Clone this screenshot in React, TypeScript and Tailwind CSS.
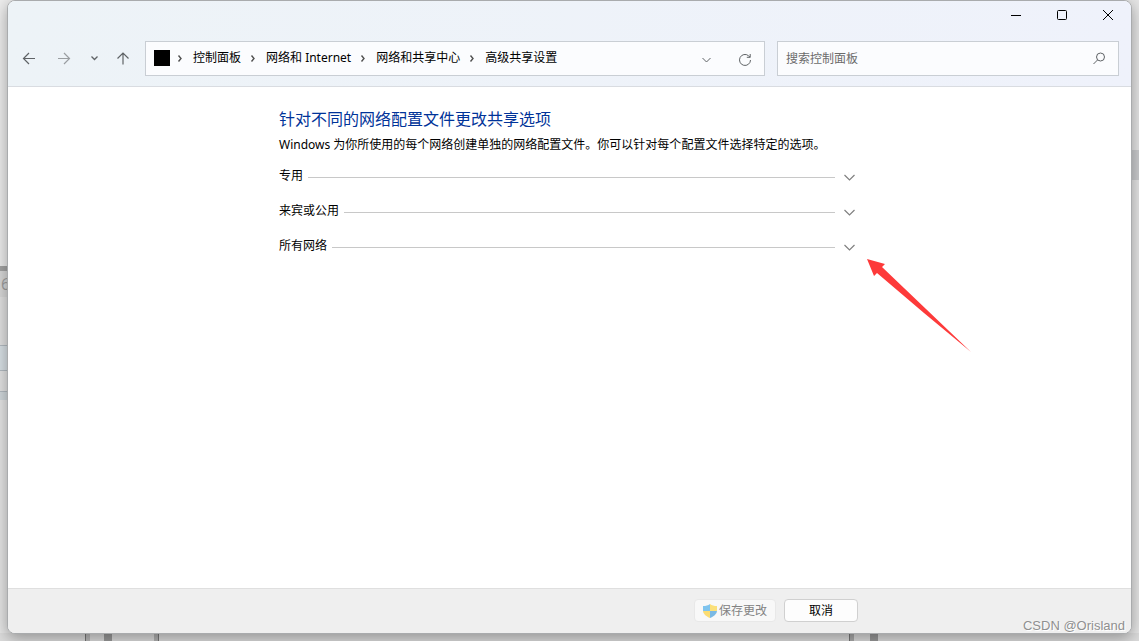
import type { ReactNode } from "react";

const crumbs = ["控制面板", "网络和 Internet", "网络和共享中心", "高级共享设置"];
const profiles = ["专用", "来宾或公用", "所有网络"];

function Icon({ size = 16, className = "", children }: { size?: number; className?: string; children: ReactNode }) {
  return (
    <svg
      width={size}
      height={size}
      viewBox={`0 0 ${size} ${size}`}
      fill="none"
      stroke="currentColor"
      className={`shrink-0 ${className}`}
      aria-hidden="true"
    >
      {children}
    </svg>
  );
}

function Shield() {
  return (
    <svg width="14" height="14" viewBox="0 0 14 14" className="shrink-0" aria-hidden="true">
      <path d="M7 0C5 1.500 3 2 0 2V7H7Z" fill="#7fc4ee" />
      <path d="M7 0C9 1.500 11 2 14 2V7H7Z" fill="#fbe07a" />
      <path d="M0 7H7V14C3.500 12.500 .4 10.500 0 7Z" fill="#fbdc72" />
      <path d="M14 7H7V14C10.500 12.500 13.600 10.500 14 7Z" fill="#7ab9e4" />
    </svg>
  );
}

// Windows that stay partly visible around the dialog
function Backdrop() {
  return (
    <div className="absolute inset-0 overflow-hidden bg-[#e6e6e6]" aria-hidden="true">
      <div className="flex h-full w-4 flex-col font-['Open_Sans',sans-serif] text-[16px] text-[#a0a0a0]">
        <div className="h-[266px] bg-[#ededed]" />
        <div className="h-[5px] bg-[#a4a4a4]" />
        <div className="flex h-[26px] items-center bg-[#d9d9d9] pl-[1px]">6</div>
        <div className="h-12 bg-[#e2e2e2]" />
        <div className="h-[26px] border-y border-[#b4bcc2] bg-[#d9e1e6]" />
        <div className="h-[21px] border-b border-[#b4bcc2] bg-[#e4e4e4]" />
        <div className="h-2 bg-[#d2d9dd]" />
        <div className="flex-1 bg-[#e6e6e6]" />
      </div>
      <div className="absolute right-0 top-[150px] h-[30px] w-2 bg-[#cccdcf]" />
      <div className="absolute inset-x-0 bottom-0 flex h-2 bg-[#dcdcdc]">
        <div className="ml-[85px] w-[5px] border-l border-[#777] bg-[#b9b9b9]" />
        <div className="ml-[14px] w-2 bg-[#999]" />
        <div className="ml-[42px] w-[5px] border-r border-[#777] bg-[#b0b0b0]" />
        <div className="flex-1" />
        <div className="w-[5px] border-l border-[#777] bg-[#aaa]" />
        <div className="ml-4 mr-[261px] w-2 bg-[#999]" />
      </div>
    </div>
  );
}

function TitleBar() {
  return (
    <div className="flex h-[30px] items-center justify-end text-black">
      <button aria-label="最小化" className="flex h-full w-[46px] items-center justify-center">
        <Icon size={12}>
          <path d="M1 5.500H11" />
        </Icon>
      </button>
      <button aria-label="最大化" className="flex h-full w-[46px] items-center justify-center">
        <Icon size={12}>
          <rect x="1.500" y="0.500" width="9" height="9" rx="1" />
        </Icon>
      </button>
      <button aria-label="关闭" className="flex h-full w-[46px] items-center justify-center">
        <Icon size={12}>
          <path d="M1 0L11 10M11 0L1 10" />
        </Icon>
      </button>
    </div>
  );
}

function NavBar() {
  return (
    <div className="flex items-center pb-[10px] pl-[13px] pr-3 pt-[10px] text-[#5f6366]">
      <button aria-label="后退">
        <Icon>
          <path d="M14 7.500H2.500M8 2L2.500 7.500L8 13" strokeWidth="1.200" />
        </Icon>
      </button>
      <button aria-label="前进" className="ml-[19px] text-[#9a9ea1]">
        <Icon>
          <path d="M2 7.500H13.500M8 2L13.500 7.500L8 13" strokeWidth="1.200" />
        </Icon>
      </button>
      <button aria-label="最近浏览的位置" className="ml-[15px]">
        <Icon>
          <path d="M4.500 5.500L7.500 8.500L10.500 5.500" strokeWidth="1.300" />
        </Icon>
      </button>
      <button aria-label="向上" className="ml-3">
        <Icon>
          <path d="M8 13.500V2M2.500 7.500L8 2L13.500 7.500" strokeWidth="1.200" />
        </Icon>
      </button>

      <div className="ml-[14px] flex h-[35px] flex-1 items-center border border-[#c9ced4] bg-[#fbfcfe] pl-2 pr-[11px]">
        <span className="mb-[1px] size-4 bg-black" />
        <nav aria-label="地址" className="mb-[2px] flex items-center text-black">
          {crumbs.map((crumb) => (
            <span key={crumb} className="flex items-center">
              <Icon size={8} className="ml-[6px] mr-[9px] text-[#505050]">
                <path d="M2.500 1.500L5 4.500L2.500 7.500" strokeWidth="1.400" />
              </Icon>
              <a href="#" className="mr-[2px] whitespace-nowrap">
                {crumb}
              </a>
            </span>
          ))}
        </nav>
        <button aria-label="以前的位置" className="ml-auto mt-[2px]">
          <Icon>
            <path d="M3.500 6L7.500 10L11.500 6" />
          </Icon>
        </button>
        <button aria-label="刷新" className="ml-[22px] mt-[3px]">
          <Icon>
            <path d="M13.500 8A5.500 5.500 0 1 1 11.500 3.700L13 5.200M13.200 2V5.300H9.800" />
          </Icon>
        </button>
      </div>

      <label className="ml-3 flex h-[35px] w-[342px] items-center border border-[#c9ced4] bg-[#fbfcfe] pl-2 pr-3">
        <input
          type="text"
          aria-label="搜索控制面板"
          placeholder="搜索控制面板"
          className="min-w-0 flex-1 bg-transparent outline-none placeholder:text-[#6b6b6b]"
        />
        <Icon size={14}>
          <circle cx="8.500" cy="5" r="4" />
          <path d="M5.500 8L1.500 12" />
        </Icon>
      </label>
    </div>
  );
}

function ProfileRow({ name }: { name: string }) {
  return (
    <button className="flex h-[35px] w-full items-center text-left" aria-expanded="false">
      <span className="pb-[3px]">{name}</span>
      <span className="ml-[5px] mr-[6px] h-px flex-1 bg-[#c8c8c8]" />
      <Icon className="mr-[3px] text-[#808080]">
        <path d="M3.500 5L8.500 10L13.500 5" strokeWidth="1.200" />
      </Icon>
    </button>
  );
}

export default function App() {
  return (
    <div className="relative flex min-h-screen flex-col font-['Noto_Sans','Noto_Sans_CJK_SC',sans-serif] text-[12px] leading-[18px] text-black">
      <Backdrop />
      <div className="relative mx-[7px] mb-[7px] flex flex-1 flex-col overflow-hidden rounded-lg border border-[#a9abad] bg-white shadow-[0_4px_16px_rgba(0,0,0,0.35)]">
        <header className="border-b border-[#d9dce1] bg-linear-to-r from-[#edf3f7] to-[#eff2fb]">
          <TitleBar />
          <NavBar />
        </header>

        <main className="mx-auto w-[581px] flex-1 pt-5">
          <h1 className="text-[16px] leading-6 text-[#003399]">针对不同的网络配置文件更改共享选项</h1>
          <p className="mt-[5px] whitespace-nowrap">
            Windows 为你所使用的每个网络创建单独的网络配置文件。你可以针对每个配置文件选择特定的选项。
          </p>
          <div className="mt-[6px]">
            {profiles.map((name) => (
              <ProfileRow key={name} name={name} />
            ))}
          </div>
        </main>

        <footer className="border-t border-[#dfdfdf] bg-[#efefef]">
          <div className="mx-auto flex h-11 w-[581px] items-start justify-end gap-2 pr-[2px] pt-[10px]">
            <button
              disabled
              className="flex h-[23px] w-[82px] items-center justify-center gap-[2px] rounded border border-[#e8e8e8] bg-[#f8f8f8] text-[#838383]"
            >
              <Shield />
              保存更改
            </button>
            <button className="h-[23px] w-[74px] rounded border border-[#d0d0d0] bg-[#fdfdfd] leading-5">取消</button>
          </div>
        </footer>
      </div>

      {/* pointer to the last row */}
      <svg
        className="absolute left-[866px] top-[258px]"
        width="106"
        height="96"
        viewBox="0 0 106 96"
        fill="#fd3a3a"
        aria-hidden="true"
      >
        <path d="M1 1L19 6L16 9L60 51L105 94L58 55L11 15L8 18Z" />
      </svg>

      <span className="absolute bottom-[6px] right-[14px] font-['Liberation_Sans',sans-serif] text-[13px] text-[#8f8f8f] [text-shadow:1px_1px_0_#fff]">
        CSDN @Orisland
      </span>
    </div>
  );
}
